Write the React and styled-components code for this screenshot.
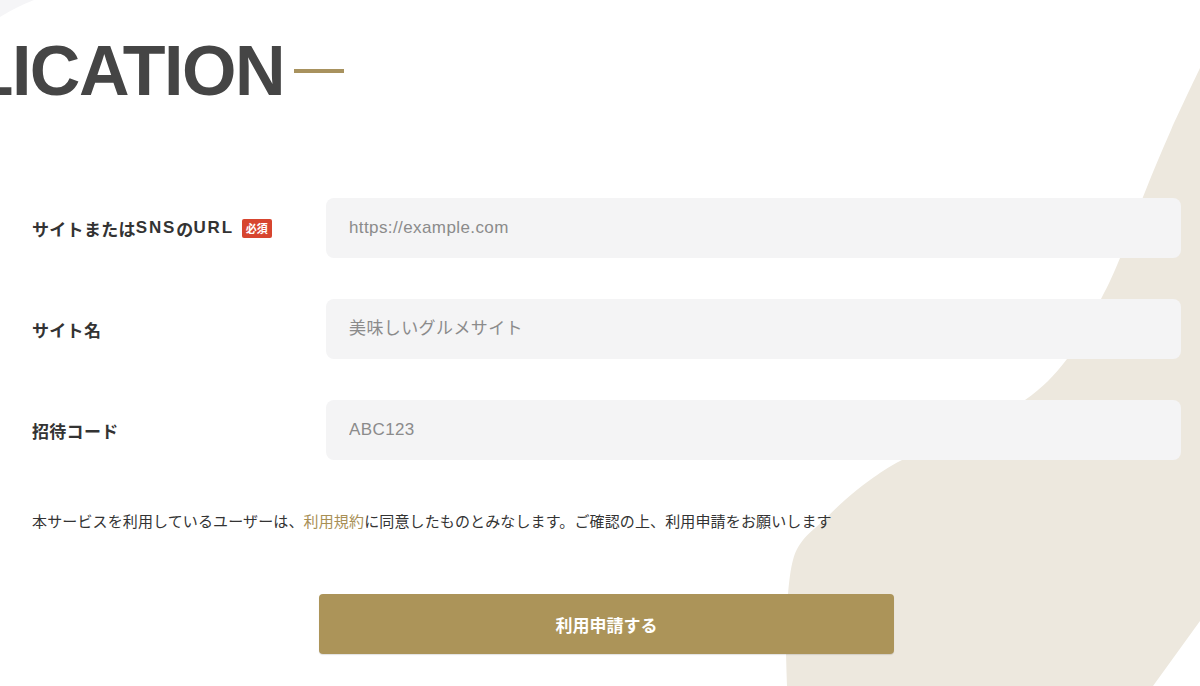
import React from 'react';
import styled, { createGlobalStyle } from 'styled-components';

const GlobalStyle = createGlobalStyle`
  * { box-sizing: border-box; }
  html, body { margin: 0; padding: 0; background: #fff; }
  body {
    font-family: "Liberation Sans", "Noto Sans CJK JP", sans-serif;
    color: #333;
  }
`;

const Page = styled.div`
  position: relative;
  width: 100%;
  min-height: 686px;
  overflow: hidden;
  background: #fff;
`;

const Backdrop = styled.svg`
  position: absolute;
  top: 0;
  left: 0;
  width: 1200px;
  height: 686px;
  z-index: 0;
  pointer-events: none;
`;

const Content = styled.div`
  position: relative;
  z-index: 1;
  padding: 36px 19px 0 32px;
`;

const TitleRow = styled.div`
  display: flex;
  align-items: center;
  justify-content: flex-end;
  width: 344px;
  margin-left: -32px;
`;

const Title = styled.h1`
  margin: 0;
  font-family: "Liberation Sans", "Roboto", sans-serif;
  font-weight: 700;
  font-size: 70px;
  line-height: 70px;
  letter-spacing: -1.5px;
  color: #454545;
  white-space: nowrap;
  flex-shrink: 0;
`;

const Dash = styled.span`
  flex-shrink: 0;
  width: 50px;
  height: 4px;
  margin-left: 10px;
  background: #a8925e;
`;

const Form = styled.form`
  display: flex;
  flex-direction: column;
  gap: 41px;
  margin-top: 92px;
`;

const Row = styled.div`
  display: grid;
  grid-template-columns: 294px 1fr;
  align-items: center;
`;

const Label = styled.label`
  display: flex;
  align-items: center;
  font-size: 17px;
  font-weight: 700;
  letter-spacing: 0.3px;
  color: #333;
`;

const Latin = styled.span`
  letter-spacing: 1.8px;
`;

const Badge = styled.span`
  display: inline-flex;
  align-items: center;
  justify-content: center;
  height: 19px;
  padding: 0 4px;
  margin-left: 8px;
  border-radius: 2px;
  background: #d7452f;
  color: #fff;
  font-size: 11px;
  font-weight: 700;
  letter-spacing: 0;
  font-family: "Noto Sans CJK JP", sans-serif;
`;

const Input = styled.input`
  width: 100%;
  height: 60px;
  padding: 0 23px;
  border: none;
  border-radius: 8px;
  background: #f4f4f5;
  font-family: "Liberation Sans", "Noto Sans CJK JP", sans-serif;
  font-size: 17px;
  letter-spacing: 0.4px;
  color: #333;
  outline: none;

  &::placeholder {
    color: #8b8b8b;
  }
`;

const Note = styled.p`
  margin: 49px 0 0;
  font-family: "Noto Sans CJK JP", sans-serif;
  font-size: 15px;
  line-height: 24px;
  letter-spacing: 0.13px;
  color: #333;
`;

const TermsLink = styled.a`
  color: #a88f55;
  text-decoration: none;
`;

const Actions = styled.div`
  display: flex;
  justify-content: center;
  margin-top: 61px;
`;

const SubmitButton = styled.button`
  width: 50%;
  height: 60px;
  border: none;
  border-radius: 4px;
  background: #ac9459;
  box-shadow: 0 1px 1px rgba(0, 0, 0, 0.12);
  color: #fff;
  font-family: "Noto Sans CJK JP", sans-serif;
  font-size: 17px;
  font-weight: 700;
  cursor: pointer;
`;

const blobPoints = [
  [1200, 68], [1171, 130], [1143, 197], [1120, 258], [1101, 299],
  [1067, 359], [1025, 400], [962, 433], [902, 460], [870, 480],
  [845, 500], [824, 520], [803, 540], [793, 560], [788, 594],
  [786, 640], [787, 686],
];

// smooth the traced edge with a catmull-rom curve
function smoothPath(pts) {
  let d = `M${pts[0][0]} ${pts[0][1]}`;
  for (let i = 0; i < pts.length - 1; i++) {
    const p0 = pts[i - 1] || pts[i];
    const p1 = pts[i];
    const p2 = pts[i + 1];
    const p3 = pts[i + 2] || p2;
    const c1x = p1[0] + (p2[0] - p0[0]) / 6;
    const c1y = p1[1] + (p2[1] - p0[1]) / 6;
    const c2x = p2[0] - (p3[0] - p1[0]) / 6;
    const c2y = p2[1] - (p3[1] - p1[1]) / 6;
    d += ` C${c1x.toFixed(1)} ${c1y.toFixed(1)} ${c2x.toFixed(1)} ${c2y.toFixed(1)} ${p2[0]} ${p2[1]}`;
  }
  return d + ' L1153 686 L1200 621 Z';
}

const fields = [
  { id: 'url', label: ['サイトまたは', 'SNS', 'の', 'URL'], placeholder: 'https://example.com', required: true },
  { id: 'name', label: ['サイト名'], placeholder: '美味しいグルメサイト' },
  { id: 'code', label: ['招待コード'], placeholder: 'ABC123' },
];

function App() {
  return (
    <Page>
      <GlobalStyle />
      <Backdrop viewBox="0 0 1200 686" aria-hidden="true">
        <path d="M0 0 L34 0 Q16 7 0 17 Z" fill="#f5f5f7" />
        <path d={smoothPath(blobPoints)} fill="#ede8de" />
      </Backdrop>

      <Content>
        <TitleRow>
          <Title>APPLICATION</Title>
          <Dash />
        </TitleRow>

        <Form onSubmit={(e) => e.preventDefault()}>
          {fields.map((f) => (
            <Row key={f.id}>
              <Label htmlFor={f.id}>
                {f.label.map((part, i) =>
                  /^[A-Z]+$/.test(part) ? <Latin key={i}>{part}</Latin> : <span key={i}>{part}</span>
                )}
                {f.required && <Badge>必須</Badge>}
              </Label>
              <Input id={f.id} placeholder={f.placeholder} />
            </Row>
          ))}
        </Form>

        <Note>
          本サービスを利用しているユーザーは、<TermsLink href="#">利用規約</TermsLink>に同意したものとみなします。ご確認の上、利用申請をお願いします
        </Note>

        <Actions>
          <SubmitButton type="submit">利用申請する</SubmitButton>
        </Actions>
      </Content>
    </Page>
  );
}

export default App;
